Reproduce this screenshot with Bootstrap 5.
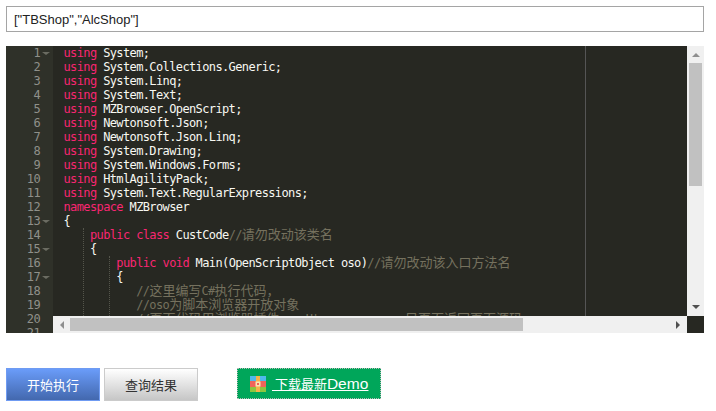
<!DOCTYPE html>
<html lang="zh">
<head>
<meta charset="utf-8">
<title>MZBrowser</title>
<link href="https://cdn.jsdelivr.net/npm/bootstrap@5.3.0/dist/css/bootstrap.min.css" rel="stylesheet">
<style>
body{background:#fff;font-family:"Liberation Sans","Noto Sans CJK SC",sans-serif;padding:6px 12px 0 6px;}
.json-input{height:26px;border:1px solid #a5a5a5;border-radius:0;padding:0 7px;font-size:13px;color:#222;font-family:"Liberation Sans",sans-serif;box-shadow:none;}
.ed{display:grid;grid-template-columns:47px 1fr 17px;grid-template-rows:270px 17px;height:287px;margin-top:14px;background:#272822;font:12px/14px "DejaVu Sans Mono","Noto Sans CJK SC",monospace;overflow:hidden;}
.ed-gutter{grid-row:1 / 3;background:#2f3129;color:#8f908a;overflow:hidden;}
.gut-line{height:14px;display:flex;justify-content:flex-end;align-items:center;padding-right:13px;position:relative;letter-spacing:-.62px;}
.fold{position:absolute;right:3px;top:6px;border-left:4px solid transparent;border-right:4px solid transparent;border-top:3px solid #6b6c62;}
.ed-code{position:relative;overflow:hidden;padding-left:10.5px;color:#f8f8f2;letter-spacing:-.62px;}
.code-line{height:14px;white-space:pre;}
.kw{color:#f92672;}
.cm{color:#75715e;}
.zh{font-size:13px;letter-spacing:0;}
.margin-rule{position:absolute;left:532px;top:0;bottom:0;border-left:1px solid #555;}
.guide{position:absolute;border-left:1px dotted #55564c;}
.guide-a{left:30px;height:100px;top:182px;}
.guide-b{left:56px;height:72px;top:210px;}
.sb-v{background:#f0f0f0;display:flex;flex-direction:column;align-items:center;padding:0 2px;}
.sb-h{background:#f0f0f0;display:flex;align-items:center;padding:2px 0;}
.sb-thumb-v{width:13px;height:123px;background:#c1c1c1;margin-top:6px;}
.sb-thumb-h{width:453px;height:13px;background:#c1c1c1;margin-left:6px;}
.arr{width:0;height:0;border:4px solid transparent;}
.arr-up{border-top:0;border-bottom:4px solid #8f8f8f;margin-top:7px;}
.arr-down{border-bottom:0;border-top:4px solid #505050;margin-top:auto;margin-bottom:7px;}
.arr-left{border-left:0;border-right:4px solid #8f8f8f;margin-left:7px;}
.arr-right{border-right:0;border-left:4px solid #505050;margin-left:auto;margin-right:7px;}
.actions{display:flex;align-items:flex-start;margin-top:35px;}
.act-btn{width:94px;height:33px;border-radius:0;font-size:13px;line-height:1;padding:0;display:flex;align-items:center;justify-content:center;font-family:"Noto Sans CJK SC",sans-serif;}
.act-go,.act-go:hover{background:linear-gradient(#6a9cf9,#4368ae);border:1px solid #6f9bf2;color:#fff;}
.act-query,.act-query:hover{background:linear-gradient(#fff,#c6c6c6);border:1px solid #cbcbcb;color:#333;margin-left:4px;}
.dl-link,.dl-link:hover{margin-left:39px;width:144px;height:31px;background:#00a65a;border:1px dotted #b9b9b9;color:#fff;font-size:13px;display:flex;align-items:center;padding-left:12px;gap:6px;font-family:"Noto Sans CJK SC",sans-serif;}
.dl-text{text-decoration:underline;white-space:pre;}
.dl-latin{font:15.5px "Liberation Sans",sans-serif;}
</style>
</head>
<body>
<input class="form-control json-input" type="text" value='["TBShop","AlcShop"]'>
<div class="ed">
  <div class="ed-gutter">
    <div class="gut-line">1<span class="fold"></span></div>
    <div class="gut-line">2</div><div class="gut-line">3</div><div class="gut-line">4</div><div class="gut-line">5</div><div class="gut-line">6</div><div class="gut-line">7</div><div class="gut-line">8</div><div class="gut-line">9</div><div class="gut-line">10</div><div class="gut-line">11</div><div class="gut-line">12</div>
    <div class="gut-line">13<span class="fold"></span></div>
    <div class="gut-line">14</div>
    <div class="gut-line">15<span class="fold"></span></div>
    <div class="gut-line">16</div>
    <div class="gut-line">17<span class="fold"></span></div>
    <div class="gut-line">18</div><div class="gut-line">19</div><div class="gut-line">20</div><div class="gut-line">21</div>
  </div>
  <div class="ed-code">
    <span class="margin-rule"></span><span class="guide guide-a"></span><span class="guide guide-b"></span>
    <div class="code-line"><span class="kw">using</span> System;</div>
    <div class="code-line"><span class="kw">using</span> System.Collections.Generic;</div>
    <div class="code-line"><span class="kw">using</span> System.Linq;</div>
    <div class="code-line"><span class="kw">using</span> System.Text;</div>
    <div class="code-line"><span class="kw">using</span> MZBrowser.OpenScript;</div>
    <div class="code-line"><span class="kw">using</span> Newtonsoft.Json;</div>
    <div class="code-line"><span class="kw">using</span> Newtonsoft.Json.Linq;</div>
    <div class="code-line"><span class="kw">using</span> System.Drawing;</div>
    <div class="code-line"><span class="kw">using</span> System.Windows.Forms;</div>
    <div class="code-line"><span class="kw">using</span> HtmlAgilityPack;</div>
    <div class="code-line"><span class="kw">using</span> System.Text.RegularExpressions;</div>
    <div class="code-line"><span class="kw">namespace</span> MZBrowser</div>
    <div class="code-line">{</div>
    <div class="code-line">    <span class="kw">public class</span> CustCode<span class="cm">//<span class="zh">请勿改动该类名</span></span></div>
    <div class="code-line">    {</div>
    <div class="code-line">        <span class="kw">public void</span> Main(OpenScriptObject oso)<span class="cm">//<span class="zh">请勿改动该入口方法名</span></span></div>
    <div class="code-line">        {</div>
    <div class="code-line">           <span class="cm">//<span class="zh">这里编写</span>C#<span class="zh">执行代码，</span></span></div>
    <div class="code-line">           <span class="cm">//oso<span class="zh">为脚本浏览器开放对象</span></span></div>
    <div class="code-line">           <span class="cm">//<span class="zh">页面代码用浏览器插件</span>oso.Ht             <span class="zh">只页面返回页面源码</span></span></div>
  </div>
  <div class="sb-v"><span class="arr arr-up"></span><div class="sb-thumb-v"></div><span class="arr arr-down"></span></div>
  <div class="sb-h"><span class="arr arr-left"></span><div class="sb-thumb-h"></div><span class="arr arr-right"></span></div>
  <div></div>
</div>
<div class="actions">
  <button type="button" class="btn act-btn act-go">开始执行</button>
  <button type="button" class="btn act-btn act-query">查询结果</button>
  <a class="dl-link" href="#">
    <svg width="16" height="16" viewBox="0 0 16 16"><rect width="16" height="16" rx="2" fill="#f0645a"/><rect width="16" height="5" fill="#4fb9ec"/><rect y="11" width="16" height="5" fill="#8cc63f"/><rect x="6" width="4" height="16" fill="#f7b24a"/><rect x="5.5" y="5.5" width="5" height="5" fill="#fbe3b0"/><rect x="7" y="7" width="2" height="2" fill="#f0645a"/></svg>
    <span class="dl-text"> 下载最新<span class="dl-latin">Demo</span></span>
  </a>
</div>
<script src="https://cdn.jsdelivr.net/npm/bootstrap@5.3.0/dist/js/bootstrap.bundle.min.js"></script>
</body>
</html>
